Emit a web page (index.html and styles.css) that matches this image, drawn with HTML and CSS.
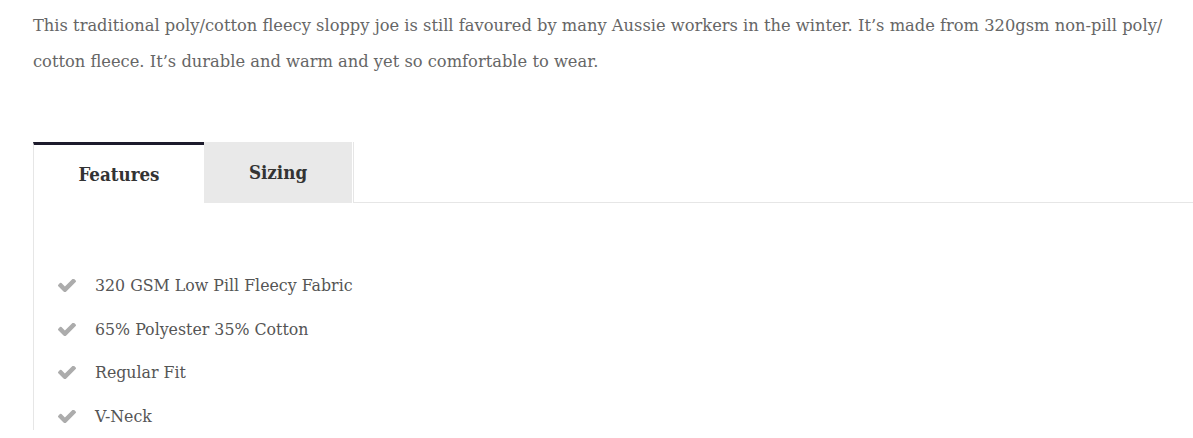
FILE: index.html
```html
<!DOCTYPE html>
<html lang="en">
<head>
    <meta charset="UTF-8">
    <meta name="viewport" content="width=device-width, initial-scale=1.0">
    <title>Fleecy Sloppy Joe</title>
    <link rel="stylesheet" href="styles.css">
</head>
<body>
    <div class="product-info">
        <p class="product-desc">This traditional poly/cotton fleecy sloppy joe is still favoured by many Aussie workers in the winter. It’s made from 320gsm non-pill poly/<wbr>cotton fleece. It’s durable and warm and yet so comfortable to wear.</p>

        <div class="tabs">
            <div class="tab-list">
                <button class="tab active">Features</button>
                <button class="tab">Sizing</button>
                <div class="tab-fill"></div>
            </div>
            <div class="tab-panel">
                <ul class="feature-list">
                    <li><svg class="check" viewBox="121 402 1550 1054"><path d="M1671 566q0 40-28 68l-724 724-136 136q-28 28-68 28t-68-28l-136-136-362-362q-28-28-28-68t28-68l136-136q28-28 68-28t68 28l294 295 656-657q28-28 68-28t68 28l136 136q28 28 28 68z"/></svg>320 GSM Low Pill Fleecy Fabric</li>
                    <li><svg class="check" viewBox="121 402 1550 1054"><path d="M1671 566q0 40-28 68l-724 724-136 136q-28 28-68 28t-68-28l-136-136-362-362q-28-28-28-68t28-68l136-136q28-28 68-28t68 28l294 295 656-657q28-28 68-28t68 28l136 136q28 28 28 68z"/></svg>65% Polyester 35% Cotton</li>
                    <li><svg class="check" viewBox="121 402 1550 1054"><path d="M1671 566q0 40-28 68l-724 724-136 136q-28 28-68 28t-68-28l-136-136-362-362q-28-28-28-68t28-68l136-136q28-28 68-28t68 28l294 295 656-657q28-28 68-28t68 28l136 136q28 28 28 68z"/></svg>Regular Fit</li>
                    <li><svg class="check" viewBox="121 402 1550 1054"><path d="M1671 566q0 40-28 68l-724 724-136 136q-28 28-68 28t-68-28l-136-136-362-362q-28-28-28-68t28-68l136-136q28-28 68-28t68 28l294 295 656-657q28-28 68-28t68 28l136 136q28 28 28 68z"/></svg>V-Neck</li>
                </ul>
            </div>
        </div>
    </div>
</body>
</html>
```

FILE: styles.css
```css
body {
    font-family: "DejaVu Serif", serif;
    margin: 0;
    padding: 0;
    background-color: #fff;
    overflow: hidden;
}
.product-info {
    width: 1190px;
    padding: 8px 0 0 33px;
}
.product-desc {
    width: 1140px;
    margin: 0;
    font-size: 16.3px;
    line-height: 36px;
    color: #666;
}
.tabs {
    margin-top: 62px;
}
.tab-list {
    display: flex;
    height: 61px;
}
.tab {
    font-family: "DejaVu Serif Condensed", "DejaVu Serif", serif;
    font-size: 18.6px;
    font-weight: bold;
    color: #333;
    border: none;
    padding: 0;
    cursor: pointer;
}
.tab.active {
    width: 171px;
    background: #fff;
    border-left: 1px solid #e6e6e6;
    border-top: 3px solid #1d1b2c;
}
.tab:not(.active) {
    width: 148px;
    background: #e9e9e9;
}
.tab-fill {
    flex: 1;
    border-left: 1px solid #e6e6e6;
    border-bottom: 1px solid #e6e6e6;
    margin-left: 1px;
}
.tab-panel {
    border-left: 1px solid #e6e6e6;
    padding: 69px 0 0 24px;
}
.feature-list {
    list-style: none;
    margin: 0;
    padding: 0;
}
.feature-list li {
    display: flex;
    align-items: center;
    height: 27.5px;
    margin-bottom: 16px;
    font-size: 15.8px;
    color: #555;
}
.check {
    width: 18px;
    height: 13px;
    margin-right: 19px;
    fill: #acacac;
}
```
